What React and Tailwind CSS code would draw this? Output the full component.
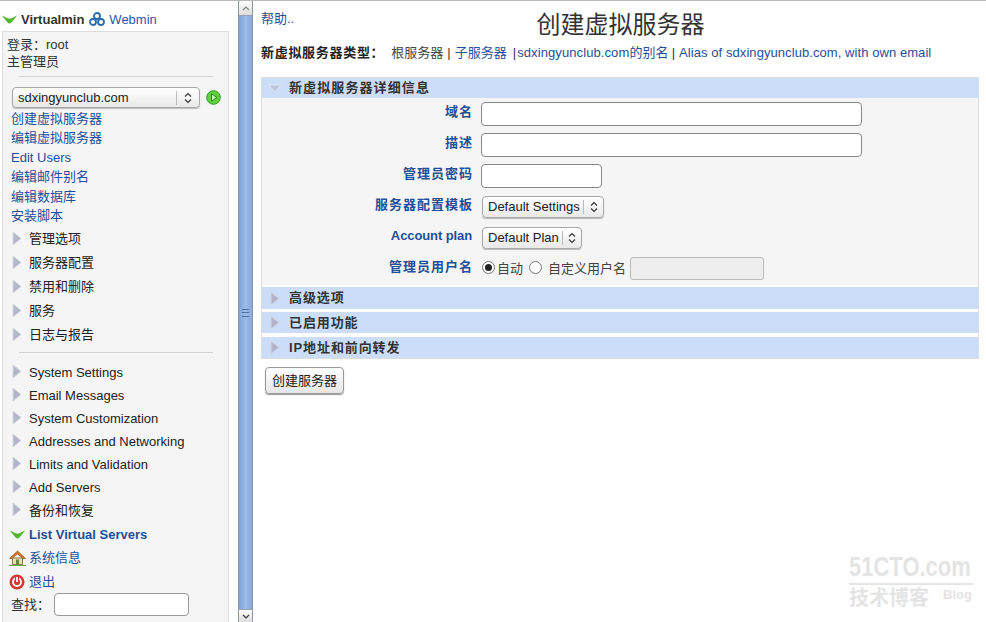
import React from 'react';

const font = 'font-["Liberation_Sans","Noto_Sans_CJK_SC",sans-serif]';

function Triangle({ className = '' }) {
  return (
    <svg width="10" height="15" viewBox="0 0 10 15" className={className}>
      <path d="M1 1 L9 7.5 L1 14 Z" fill="#b4b4c8" stroke="#d6d6e2" strokeWidth="1" />
    </svg>
  );
}

function DownTriangle({ className = '' }) {
  return (
    <svg width="14" height="9" viewBox="0 0 14 9" className={className}>
      <path d="M1 1 L13 1 L7 8 Z" fill="#bcc6da" stroke="#dfe6f2" strokeWidth="1" />
    </svg>
  );
}

function GreenChevron({ width = 15 }) {
  return (
    <svg width={width} height="9" viewBox="0 0 15 9">
      <path d="M0 0.5 C3 2 5 3.2 7.5 3.8 C10 3.2 12 2 15 0.5 C13 3.5 10.5 7 7.5 8.8 C4.5 7 2 3.5 0 0.5 Z" fill="#4fb82c" />
    </svg>
  );
}

function WebminIcon() {
  return (
    <svg width="16" height="15" viewBox="0 0 16 15" fill="none" stroke="#2b6cb0" strokeWidth="1.8">
      <circle cx="8" cy="4" r="3" />
      <circle cx="4" cy="10" r="3" />
      <circle cx="12" cy="10" r="3" />
    </svg>
  );
}

function GoIcon() {
  return (
    <svg width="15" height="15" viewBox="0 0 15 15">
      <circle cx="7.5" cy="7.5" r="6.8" fill="#5fd13f" stroke="#2c9a1f" />
      <path d="M5.5 3.8 L11 7.5 L5.5 11.2 Z" fill="#c9f5b5" stroke="#2c8a1f" />
    </svg>
  );
}

function HomeIcon() {
  return (
    <svg width="17" height="16" viewBox="0 0 17 16">
      <path d="M3.5 8 H13.5 V14.5 H3.5 Z" fill="#e9dcae" stroke="#8a7a4a" />
      <path d="M0.5 8.5 L8.5 1 L16.5 8.5 L14 8.5 L8.5 4 L3 8.5 Z" fill="#d2782a" stroke="#8d5a1f" strokeWidth="0.7" />
      <rect x="7" y="9.5" width="3" height="5" fill="#5d8a3a" />
      <path d="M0 15.5 H17" stroke="#6aa84a" />
    </svg>
  );
}

function PowerIcon() {
  return (
    <svg width="16" height="16" viewBox="0 0 16 16">
      <circle cx="8" cy="8" r="7.5" fill="#cf3a35" />
      <circle cx="8" cy="8" r="4" fill="none" stroke="#fff" strokeWidth="1.8" />
      <path d="M8 2.5 V8" stroke="#cf3a35" strokeWidth="4" />
      <path d="M8 3 V8" stroke="#fff" strokeWidth="1.8" />
    </svg>
  );
}

function SelectChevrons() {
  return (
    <svg width="8" height="12" viewBox="0 0 8 12" fill="none" stroke="#333" strokeWidth="1.1">
      <path d="M1 4.5 L4 1.5 L7 4.5" />
      <path d="M1 7.5 L4 10.5 L7 7.5" />
    </svg>
  );
}

function FakeSelect({ value, className, pad = 'w-[22px]' }) {
  return (
    <div className={`flex items-center rounded-[4px] border border-[#a8a8a8] bg-gradient-to-b from-white to-[#e9e9e9] shadow-[0_1px_1px_#bbb] text-[13px] text-[#222] ${className}`}>
      <span className="flex-1 pl-[5px] whitespace-nowrap overflow-hidden">{value}</span>
      <span className="h-[14px] border-l border-[#bbb]" />
      <span className={`flex justify-center ${pad}`}>
        <SelectChevrons />
      </span>
    </div>
  );
}

const links = [
  ['创建虚拟服务器', 'h-[20px] pt-px'],
  ['编辑虚拟服务器', 'h-[19px]'],
  ['Edit Users', 'h-[20px] pt-px'],
  ['编辑邮件别名', 'h-[19px]'],
  ['编辑数据库', 'h-[20px] pt-px'],
  ['安装脚本', 'h-[19px]'],
];
const categories = ['管理选项', '服务器配置', '禁用和删除', '服务', '日志与报告'];
const settings = [
  'System Settings',
  'Email Messages',
  'System Customization',
  'Addresses and Networking',
  'Limits and Validation',
  'Add Servers',
  '备份和恢复',
];

function Sidebar() {
  return (
    <div className="w-[238px] shrink-0 flex flex-col pl-[2px] pr-[9px]">
      <div className="h-[30px] shrink-0 flex items-center pt-[7px] text-[13px]">
        <GreenChevron />
        <span className="ml-[4px] font-bold text-[#333]">Virtualmin</span>
        <span className="ml-[5px] flex"><WebminIcon /></span>
        <span className="ml-[4px] text-[#1f5aa8]">Webmin</span>
      </div>
      <div className="flex-1 bg-[#f5f5f5] border border-[#dcdcdc] border-b-0 pl-[4px] text-[13px] text-[#333]">
        <div className="pt-[4px] leading-[17px]">
          <div>登录：root</div>
          <div>主管理员</div>
        </div>
        <div className="mt-[6px] ml-[12px] mr-[15px] h-px bg-[#d4d4d4]" />
        <div className="mt-[10px] ml-[5px] flex items-center">
          <FakeSelect value="sdxingyunclub.com" className="w-[188px] h-[21px]" />
          <span className="ml-[6px] flex"><GoIcon /></span>
        </div>
        {links.map(([label, h]) => (
          <div key={label} className={`${h} ml-[4px] flex items-center text-[#1f4f98]`}>{label}</div>
        ))}
        <div className="mt-[2px]">
          {categories.map((c) => (
            <div key={c} className="h-[24px] flex items-center text-[#222]">
              <Triangle className="ml-[5px] -mt-[1px]" />
              <span className="ml-[7px]">{c}</span>
            </div>
          ))}
        </div>
        <div className="mt-[5px] ml-[12px] mr-[15px] h-px bg-[#d4d4d4]" />
        <div className="mt-[8px]">
          {settings.map((c) => (
            <div key={c} className="h-[23px] flex items-center text-[#222]">
              <Triangle className="ml-[5px] -mt-[2px]" />
              <span className="ml-[7px]">{c}</span>
            </div>
          ))}
        </div>
        <div className="mt-[1px] h-[23px] flex items-center font-bold text-[#1f4f98]">
          <span className="ml-[3px] flex"><GreenChevron /></span>
          <span className="ml-[4px]">List Virtual Servers</span>
        </div>
        <div className="h-[23px] flex items-center text-[#1f4f98]">
          <span className="ml-[2px] flex"><HomeIcon /></span>
          <span className="ml-[3px]">系统信息</span>
        </div>
        <div className="h-[24px] pt-px flex items-center text-[#1f4f98]">
          <span className="ml-[2px] flex"><PowerIcon /></span>
          <span className="ml-[4px]">退出</span>
        </div>
        <div className="h-[23px] flex items-center">
          <span className="ml-[4px]">查找：</span>
          <input className="ml-[4px] w-[135px] h-[23px] bg-white border border-[#999] rounded-[4px]" readOnly />
        </div>
      </div>
    </div>
  );
}

function Scrollbar() {
  return (
    <div className="w-[15px] shrink-0 flex flex-col bg-[#dfe3ea] border-x border-[#8d96a5]">
      <div className="h-[15px] flex items-center justify-center bg-gradient-to-b from-white to-[#dcdcdc] rounded-t-[3px] border-b border-[#9aa3b0]">
        <svg width="8" height="5" viewBox="0 0 8 5" fill="none" stroke="#888" strokeWidth="1.2"><path d="M1 4 L4 1 L7 4" /></svg>
      </div>
      <div className="flex-1 flex items-center justify-center bg-gradient-to-r from-[#7fa4d8] via-[#9dbbe8] to-[#85a9dc]">
        <div className="w-[7px] h-[8px] border-y border-[#4f6f9f] flex items-center"><div className="w-full h-px bg-[#4f6f9f]" /></div>
      </div>
      <div className="h-[13px] flex items-center justify-center bg-gradient-to-b from-white to-[#dcdcdc] border-t border-[#9aa3b0]">
        <svg width="8" height="5" viewBox="0 0 8 5" fill="none" stroke="#333" strokeWidth="1.2"><path d="M1 1 L4 4 L7 1" /></svg>
      </div>
    </div>
  );
}

function FormRow({ label, latin, children }) {
  return (
    <div className="h-[31px] flex items-center">
      <div className={`w-[211px] shrink-0 text-right font-bold text-[#1f4f98] -mt-[3px] ${latin ? 'tracking-[-0.1px] pr-[1px]' : 'tracking-[1px]'}`}>{label}</div>
      <div className="ml-[8px] flex items-center">{children}</div>
    </div>
  );
}

function Radio({ checked }) {
  return (
    <span className="w-[13px] h-[13px] -mt-[2px] rounded-full border border-[#777] bg-white flex items-center justify-center">
      {checked && <span className="w-[7px] h-[7px] rounded-full bg-[#222]" />}
    </span>
  );
}

function SectionHeader({ label, h, mt, open }) {
  return (
    <div className={`${h} ${mt} flex items-center bg-[#cbddf8] font-bold text-[#333] ${open ? 'tracking-[1.1px]' : 'tracking-[0.9px]'}`}>
      {open ? <DownTriangle className="ml-[6px]" /> : <Triangle className="ml-[8px]" />}
      <span className={open ? 'ml-[7px]' : 'ml-[9px]'}>{label}</span>
    </div>
  );
}

function Watermark() {
  return (
    <div className="absolute left-[849px] top-[556px] w-[124px] text-[#e4e4e4] select-none">
      <div className="font-bold text-[22px] leading-[25px] whitespace-nowrap scale-y-125 origin-bottom">51CTO.com</div>
      <div className="h-[2px] bg-[#e4e4e4] mt-[1px]" />
      <div className="flex items-start justify-between mt-[2px]">
        <span className="text-[20px] leading-[22px] font-bold">技术博客</span>
        <span className="text-[13px] leading-[16px] font-bold mr-[1px]">Blog</span>
      </div>
    </div>
  );
}

function Main() {
  return (
    <div className="flex-1 min-w-0 pl-[8px] pr-[7px] text-[13px] text-[#333]">
      <div className="h-[41px] grid grid-cols-[1fr_auto_1fr] -ml-[8px] -mr-[7px] pl-[8px] pr-[6px]">
        <a className="text-[#1f4f98] pt-[8px]">帮助..</a>
        <h1 className="text-[24px] leading-[30px] pt-[9px] text-[#333] font-normal">创建虚拟服务器</h1>
        <span />
      </div>
      <div className="h-[35px] pt-px flex items-start whitespace-nowrap">
        <b className="text-[#222] tracking-[0.7px]">新虚拟服务器类型：</b>
        <span className="ml-[7px] text-[#444]">根服务器</span>
        <span className="ml-[4px]">|</span>
        <a className="ml-[4px] text-[#1f4f98]">子服务器</a>
        <span className="ml-[6px]">|</span>
        <a className="ml-[1px] text-[#1f4f98] tracking-[0.1px]">sdxingyunclub.com的别名</a>
        <span className="ml-[3px]">|</span>
        <a className="ml-[4px] text-[#1f4f98] tracking-[0.07px]">Alias of sdxingyunclub.com, with own email</a>
      </div>
      <div className="w-[718px] border border-[#dcdcdc] bg-white">
        <SectionHeader label="新虚拟服务器详细信息" h="h-[20px]" mt="" open />
        <div className="bg-[#f5f5f5] h-[187px] mb-[2px]">
          <FormRow label="域名">
            <input readOnly className="w-[381px] h-[24px] bg-white border border-[#888] rounded-[4px]" />
          </FormRow>
          <FormRow label="描述">
            <input readOnly className="w-[381px] h-[24px] bg-white border border-[#888] rounded-[4px]" />
          </FormRow>
          <FormRow label="管理员密码">
            <input readOnly className="w-[121px] h-[24px] bg-white border border-[#888] rounded-[4px]" />
          </FormRow>
          <FormRow label="服务器配置模板">
            <FakeSelect value="Default Settings" className="ml-[1px] w-[122px] h-[22px]" pad="w-[19px]" />
          </FormRow>
          <FormRow label="Account plan" latin>
            <FakeSelect value="Default Plan" className="ml-[1px] w-[100px] h-[22px]" pad="w-[18px]" />
          </FormRow>
          <FormRow label="管理员用户名">
            <span className="ml-[1px]"><Radio checked /></span>
            <span className="ml-[2px] text-[#444]">自动</span>
            <span className="ml-[6px]"><Radio /></span>
            <span className="ml-[6px] text-[#444]">自定义用户名</span>
            <input readOnly disabled className="ml-[4px] w-[134px] h-[23px] bg-[#eeeeee] border border-[#bbb] rounded-[3px]" />
          </FormRow>
        </div>
        <SectionHeader label="高级选项" h="h-[22px]" mt="" />
        <SectionHeader label="已启用功能" h="h-[21px]" mt="mt-[3px]" />
        <SectionHeader label="IP地址和前向转发" h="h-[21px]" mt="mt-[4px]" />
      </div>
      <button className="mt-[8px] ml-[4px] w-[79px] h-[27px] rounded-[4px] border border-[#999] bg-gradient-to-b from-white to-[#e6e6e6] shadow-[0_1px_1px_#999] text-[13px] text-[#222]">
        创建服务器
      </button>
    </div>
  );
}

export default function App() {
  return (
    <div className={`relative w-[986px] h-[622px] overflow-hidden bg-white border-t border-[#b9b9b9] flex ${font}`}>
      <Sidebar />
      <Scrollbar />
      <Main />
      <Watermark />
    </div>
  );
}
